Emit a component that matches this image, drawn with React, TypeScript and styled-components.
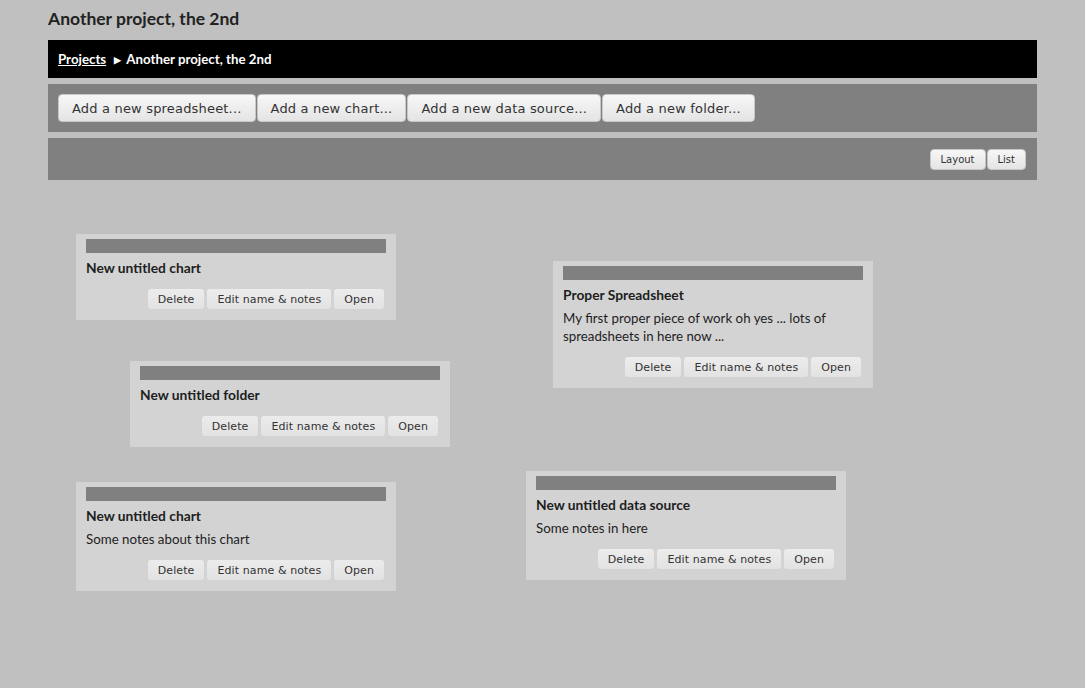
import React from "react";
import styled, { createGlobalStyle } from "styled-components";

const page_bg: string = "#c0c0c0";
const bar_grey: string = "#808080";
const card_bg: string = "#d3d3d3";
const text_font: string = '"Lato", "Open Sans", sans-serif';
const button_font: string = '"DejaVu Sans", Verdana, sans-serif';

const GlobalStyle = createGlobalStyle`
  html, body {
    margin: 0;
    padding: 0;
    background: ${page_bg};
  }
  body {
    font-family: ${text_font};
    color: #1e1e1e;
  }
`;

type CardData = {
  title: string;
  notes?: string;
  left: number;
  top: number;
};

const cards: CardData[] = [
  { title: "New untitled chart", left: 28, top: 54 },
  {
    title: "Proper Spreadsheet",
    notes: "My first proper piece of work oh yes ... lots of spreadsheets in here now ...",
    left: 505,
    top: 81,
  },
  { title: "New untitled folder", left: 82, top: 181 },
  { title: "New untitled data source", notes: "Some notes in here", left: 478, top: 291 },
  { title: "New untitled chart", notes: "Some notes about this chart", left: 28, top: 302 },
];

function ItemCard(props: { card: CardData }) {
  const { card } = props;
  return (
    <Card $left={card.left} $top={card.top}>
      <CardHandle />
      <CardTitle>{card.title}</CardTitle>
      {card.notes && <CardNotes>{card.notes}</CardNotes>}
      <CardActions>
        <SmallButton>Delete</SmallButton>
        <SmallButton>Edit name &amp; notes</SmallButton>
        <SmallButton>Open</SmallButton>
      </CardActions>
    </Card>
  );
}

function App() {
  return (
    <Page>
      <GlobalStyle />
      <Heading>Another project, the 2nd</Heading>
      <Breadcrumb>
        <CrumbLink href="#">Projects</CrumbLink>
        <CrumbArrow>&#9654;</CrumbArrow>
        <CrumbCurrent>Another project, the 2nd</CrumbCurrent>
      </Breadcrumb>
      <Toolbar>
        <AddButton>Add a new spreadsheet...</AddButton>
        <AddButton>Add a new chart...</AddButton>
        <AddButton>Add a new data source...</AddButton>
        <AddButton>Add a new folder...</AddButton>
      </Toolbar>
      <ViewBar>
        <ViewButton>Layout</ViewButton>
        <ViewButton>List</ViewButton>
      </ViewBar>
      <Canvas>
        {cards.map((c, i) => (
          <ItemCard key={i} card={c} />
        ))}
      </Canvas>
    </Page>
  );
}

const Page = styled.div`
  width: 989px;
  margin-left: 48px;
  min-height: 688px;
`;

const Heading = styled.h1`
  margin: 0;
  height: 40px;
  line-height: 38px;
  font-size: 17.5px;
  font-weight: 700;
  color: #222;
`;

const Breadcrumb = styled.div`
  height: 38px;
  background: #000;
  display: flex;
  align-items: center;
  padding: 0 10px;
  font-size: 13.3px;
  font-weight: 700;
  color: #fff;
`;

const CrumbLink = styled.a`
  color: #fff;
  text-decoration: underline;
`;

const CrumbArrow = styled.span`
  font-size: 9px;
  margin: 0 5px 0 8px;
`;

const CrumbCurrent = styled.span``;

const Toolbar = styled.div`
  margin-top: 6px;
  background: ${bar_grey};
  padding: 10px;
  display: flex;
  gap: 1px;
`;

const ButtonBase = styled.button`
  font-family: ${button_font};
  color: #333;
  background: linear-gradient(#f7f7f7, #e4e4e4);
  border: 1px solid #c8c8c8;
  border-radius: 4px;
  cursor: pointer;
`;

const AddButton = styled(ButtonBase)`
  height: 28px;
  padding: 0 13px;
  font-size: 13px;
  letter-spacing: 0.18px;
`;

const ViewBar = styled.div`
  margin-top: 6px;
  height: 42px;
  background: ${bar_grey};
  padding: 0 11px;
  display: flex;
  justify-content: flex-end;
  align-items: center;
  gap: 1px;
`;

const ViewButton = styled(ButtonBase)`
  height: 21px;
  padding: 0 10px;
  font-size: 10px;
`;

const Canvas = styled.div`
  position: relative;
  height: 508px;
`;

const Card = styled.div<{ $left: number; $top: number }>`
  position: absolute;
  left: ${(p) => p.$left}px;
  top: ${(p) => p.$top}px;
  width: 300px;
  padding: 5px 10px 11px;
  background: ${card_bg};
`;

const CardHandle = styled.div`
  height: 14px;
  background: ${bar_grey};
`;

const CardTitle = styled.div`
  margin-top: 6px;
  line-height: 18px;
  font-size: 13.8px;
  font-weight: 700;
`;

const CardNotes = styled.div`
  margin-top: 5px;
  line-height: 18px;
  font-size: 13.3px;
`;

const CardActions = styled.div`
  margin-top: 12px;
  display: flex;
  justify-content: flex-end;
  gap: 3px;
  padding-right: 2px;
`;

const SmallButton = styled.button`
  height: 20px;
  padding: 0 10px;
  font-family: ${button_font};
  font-size: 11px;
  letter-spacing: 0.1px;
  color: #333;
  background: linear-gradient(#ececec, #e2e2e2);
  border: none;
  border-radius: 3px;
  cursor: pointer;
`;

export default App;
